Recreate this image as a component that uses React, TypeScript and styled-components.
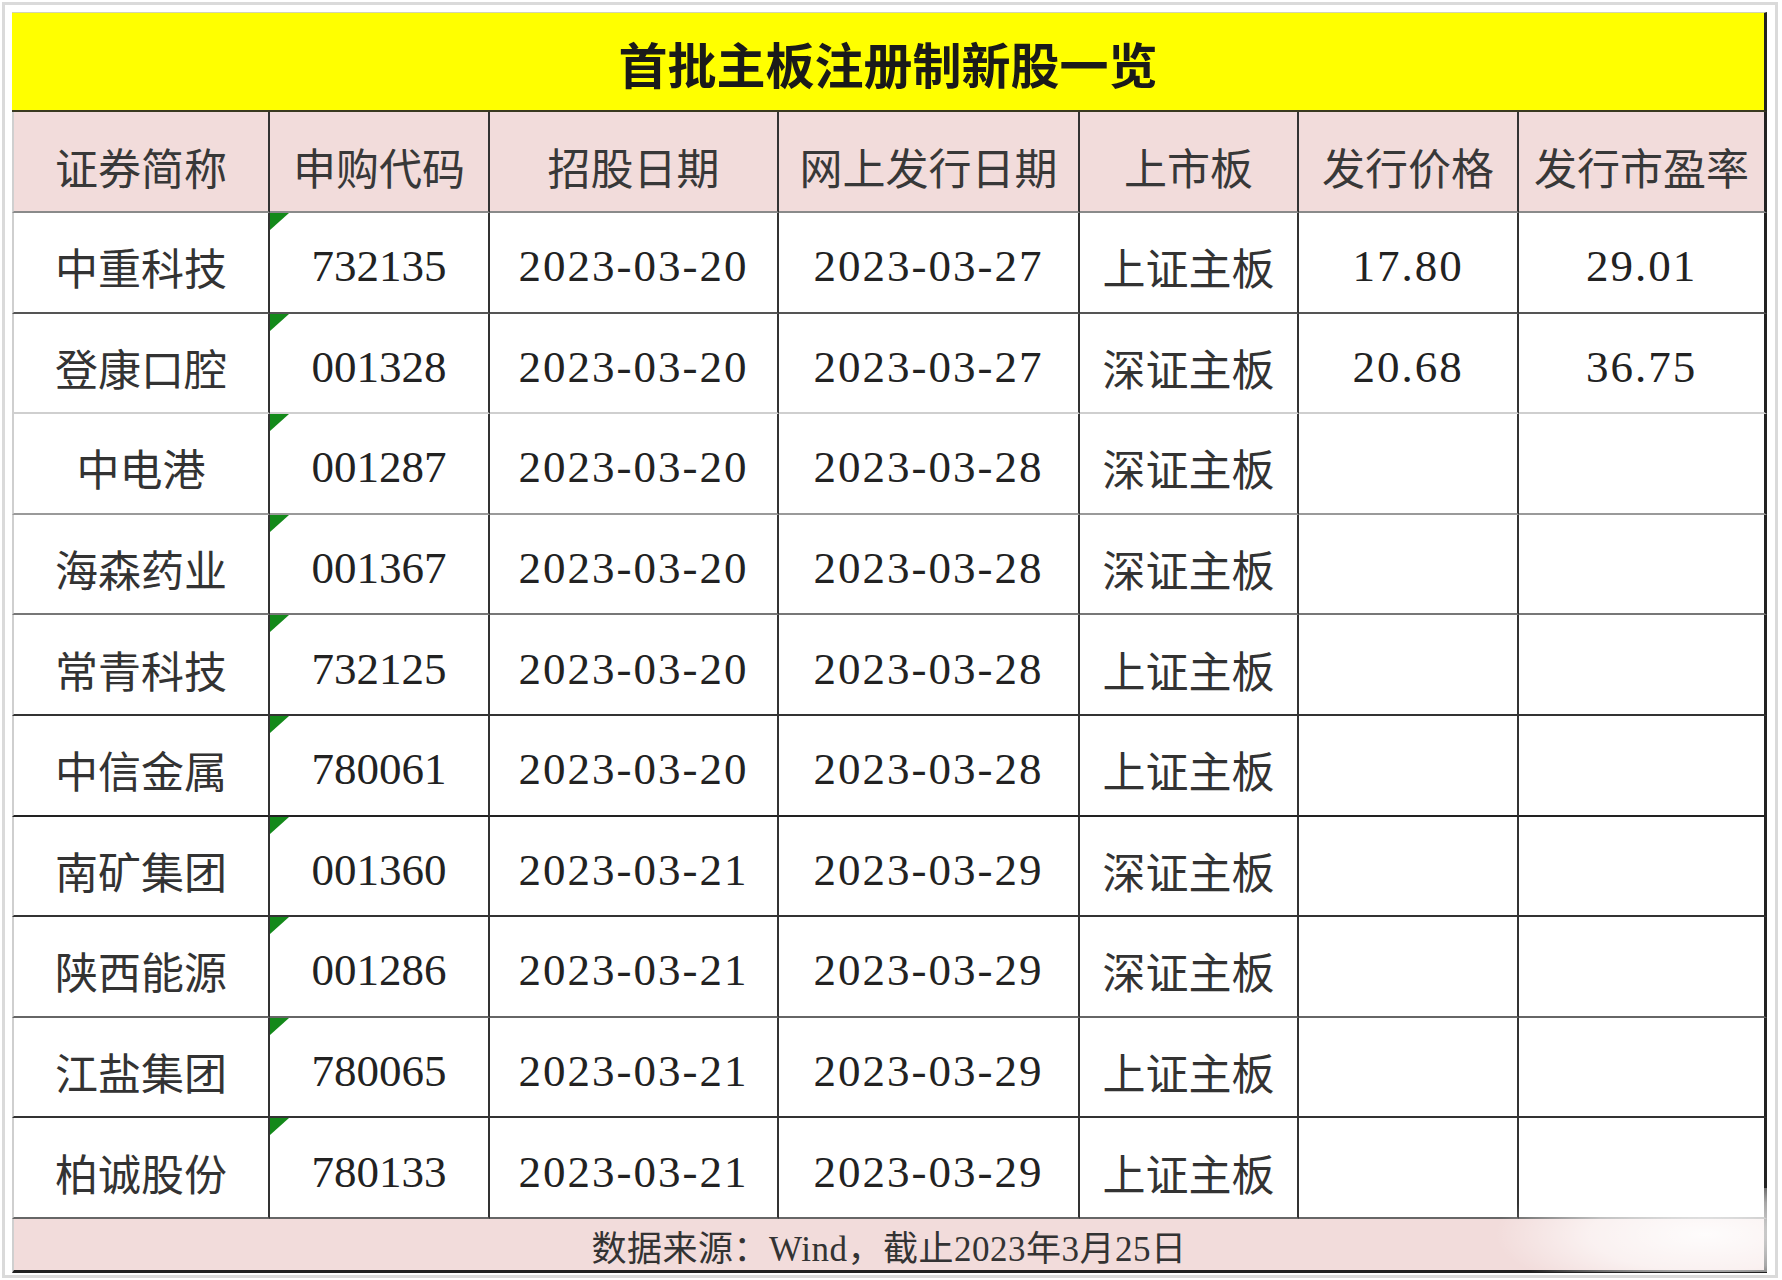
import styled, { createGlobalStyle } from "styled-components";

const GlobalStyle = createGlobalStyle`
  html, body { margin: 0; padding: 0; background: #ffffff; }
  * { box-sizing: border-box; }
`;

const Page = styled.div`
  width: 1782px;
  height: 1280px;
  padding: 2px 4px 2px 2px;
  background: #ffffff;
`;

const Frame = styled.div`
  height: 100%;
  border: 3px solid #dadada;
  padding: 7px 8px 2px 7px;
`;

const Sheet = styled.div`
  position: relative;
  display: grid;
  grid-template-columns: 258px 220px 289px 301px 219px 220px 248px;
  grid-template-rows: 100px 101px repeat(10, 100.6px) 54px;
  width: 1755px;
  color: #222;
  font-family: "Liberation Serif", "Noto Sans CJK SC", serif;
`;

const TitleCell = styled.div`
  grid-column: 1 / -1;
  display: flex;
  align-items: center;
  justify-content: center;
  background: #ffff00;
  border-top: 1px solid #d4d4b0;
  border-right: 3px solid #222;
  border-bottom: 2px solid #3a3a20;
  font-family: "Noto Sans CJK SC", sans-serif;
  font-size: 49px;
  font-weight: 700;
  color: #1a1a1a;
  padding-top: 2px;
`;

const HeadCell = styled.div<{ $first?: boolean; $last?: boolean }>`
  display: flex;
  align-items: center;
  justify-content: center;
  background: #f2dcdb;
  border-left: ${({ $first }) => ($first ? "2px solid #cfcfcf" : "none")};
  border-right: ${({ $last }) => ($last ? "3px solid #222" : "2px solid #333")};
  border-bottom: 2px solid #8a8a8a;
  font-family: "Noto Sans CJK SC", sans-serif;
  font-size: 43px;
  color: #383838;
  white-space: nowrap;
  padding-top: 8px;
`;

const Cell = styled.div<{
  $line: string;
  $first?: boolean;
  $last?: boolean;
  $num?: boolean;
  $wide?: boolean;
  $flag?: boolean;
}>`
  position: relative;
  display: flex;
  align-items: center;
  justify-content: center;
  background: #ffffff;
  border-left: ${({ $first }) => ($first ? "2px solid #cfcfcf" : "none")};
  border-right: ${({ $last }) => ($last ? "3px solid #222" : "2px solid #333")};
  border-bottom: 2px solid ${({ $line }) => $line};
  font-size: ${({ $num }) => ($num ? "45px" : "43px")};
  letter-spacing: ${({ $wide }) => ($wide ? "2px" : "0")};
  color: ${({ $num }) => ($num ? "#222" : "#333")};
  white-space: nowrap;
  padding-top: 8px;

  &::before {
    content: "";
    display: ${({ $flag }) => ($flag ? "block" : "none")};
    position: absolute;
    top: 0;
    left: 0;
    border-top: 17px solid #13891a;
    border-right: 19px solid transparent;
  }
`;

const Source = styled.div`
  grid-column: 1 / -1;
  display: flex;
  align-items: center;
  justify-content: center;
  background: #f2dcdb;
  border-left: 2px solid #cfcfcf;
  border-right: 3px solid #222;
  border-bottom: 3px solid #222;
  font-size: 35px;
  color: #333;
  letter-spacing: 0.5px;
  padding-top: 2px;
`;

const Smudge = styled.div`
  position: absolute;
  right: -4px;
  bottom: 1px;
  width: 300px;
  height: 84px;
  pointer-events: none;
  background: radial-gradient(
    ellipse 70% 80% at 78% 55%,
    rgba(255, 255, 255, 0.92) 0%,
    rgba(255, 255, 255, 0.6) 55%,
    rgba(255, 255, 255, 0) 100%
  );
`;

type Listing = {
  name: string;
  code: string;
  offer: string;
  online: string;
  board: string;
  price?: string;
  pe?: string;
  line: string;
};

const headers = ["证券简称", "申购代码", "招股日期", "网上发行日期", "上市板", "发行价格", "发行市盈率"];

const listings: Listing[] = [
  { name: "中重科技", code: "732135", offer: "2023-03-20", online: "2023-03-27", board: "上证主板", price: "17.80", pe: "29.01", line: "#555" },
  { name: "登康口腔", code: "001328", offer: "2023-03-20", online: "2023-03-27", board: "深证主板", price: "20.68", pe: "36.75", line: "#cfcfcf" },
  { name: "中电港", code: "001287", offer: "2023-03-20", online: "2023-03-28", board: "深证主板", line: "#9a9a9a" },
  { name: "海森药业", code: "001367", offer: "2023-03-20", online: "2023-03-28", board: "深证主板", line: "#777" },
  { name: "常青科技", code: "732125", offer: "2023-03-20", online: "2023-03-28", board: "上证主板", line: "#333" },
  { name: "中信金属", code: "780061", offer: "2023-03-20", online: "2023-03-28", board: "上证主板", line: "#222" },
  { name: "南矿集团", code: "001360", offer: "2023-03-21", online: "2023-03-29", board: "深证主板", line: "#333" },
  { name: "陕西能源", code: "001286", offer: "2023-03-21", online: "2023-03-29", board: "深证主板", line: "#666" },
  { name: "江盐集团", code: "780065", offer: "2023-03-21", online: "2023-03-29", board: "上证主板", line: "#333" },
  { name: "柏诚股份", code: "780133", offer: "2023-03-21", online: "2023-03-29", board: "上证主板", line: "#666" },
];

export default function App() {
  return (
    <>
      <GlobalStyle />
      <Page>
        <Frame>
          <Sheet>
            <TitleCell>首批主板注册制新股一览</TitleCell>
            {headers.map((h, i) => (
              <HeadCell key={h} $first={i === 0} $last={i === headers.length - 1}>
                {h}
              </HeadCell>
            ))}
            {listings.map((row) => (
              <ListingRow key={row.code} row={row} />
            ))}
            <Source>数据来源：Wind，截止2023年3月25日</Source>
            <Smudge />
          </Sheet>
        </Frame>
      </Page>
    </>
  );
}

function ListingRow({ row }: { row: Listing }) {
  return (
    <>
      <Cell $line={row.line} $first>{row.name}</Cell>
      <Cell $line={row.line} $num $flag>{row.code}</Cell>
      <Cell $line={row.line} $num $wide>{row.offer}</Cell>
      <Cell $line={row.line} $num $wide>{row.online}</Cell>
      <Cell $line={row.line}>{row.board}</Cell>
      <Cell $line={row.line} $num $wide>{row.price ?? ""}</Cell>
      <Cell $line={row.line} $num $wide $last>{row.pe ?? ""}</Cell>
    </>
  );
}
